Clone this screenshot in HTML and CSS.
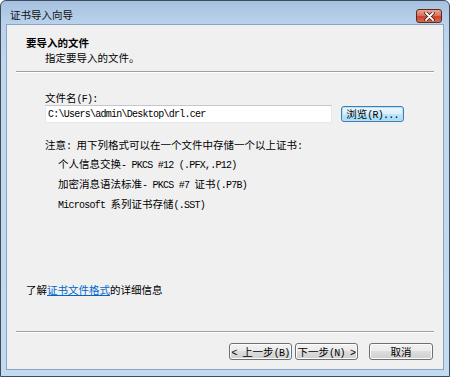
FILE: index.html
```html
<!DOCTYPE html>
<html lang="zh-CN">

<head>
	<meta charset="UTF-8">
	<meta name="viewport" content="width=device-width, initial-scale=1.0">
	<title>证书导入向导</title>
	<link rel="stylesheet" href="styles.css">
</head>

<body>
	<div class="window">
		<div class="titlebar">
			<span class="title">证书导入向导</span>
			<button class="close" aria-label="关闭">
				<svg width="11" height="9" viewBox="0 0 11 9">
					<path d="M2 1 L9 8 M9 1 L2 8" stroke="#3a1a14" stroke-width="3.4" stroke-linecap="round" />
					<path d="M2 1 L9 8 M9 1 L2 8" stroke="#ffffff" stroke-width="1.8" stroke-linecap="round" />
				</svg>
			</button>
		</div>

		<div class="client">
			<div class="header">
				<h1>要导入的文件</h1>
				<p>指定要导入的文件。</p>
			</div>
			<div class="sep"></div>

			<div class="content">
				<label for="file">文件名<span class="en">(F):</span></label>
				<div class="file-row">
					<input type="text" id="file" value="C:\Users\admin\Desktop\drl.cer" />
					<button class="btn btn-default">浏览<span class="en">(R)...</span></button>
				</div>

				<p class="note">注意<span class="en">: </span>用下列格式可以在一个文件中存储一个以上证书<span class="en">:</span></p>
				<ul class="formats">
					<li>个人信息交换<span class="en">- PKCS #12 (.PFX,.P12)</span></li>
					<li>加密消息语法标准<span class="en">- PKCS #7 </span>证书<span class="en">(.P7B)</span></li>
					<li><span class="en">Microsoft </span>系列证书存储<span class="en">(.SST)</span></li>
				</ul>
			</div>

			<p class="more">了解<a href="#">证书文件格式</a>的详细信息</p>

			<div class="sep sep-bottom"></div>
			<div class="footer">
				<button class="btn"><span class="en">&lt; </span>上一步<span class="en">(B)</span></button>
				<button class="btn">下一步<span class="en">(N) &gt;</span></button>
				<button class="btn btn-cancel">取消</button>
			</div>
		</div>
	</div>
</body>

</html>
```

FILE: styles.css
```css
* {
	margin: 0;
	padding: 0;
	box-sizing: border-box;
}

body {
	width: 450px;
	height: 377px;
	overflow: hidden;
	background: #ffffff;
	font-family: "Noto Sans CJK SC", "Noto Sans", sans-serif;
	font-size: 10.5px;
	line-height: 15px;
	color: #000000;
}

.en {
	font-family: "Liberation Mono", "Noto Sans CJK SC", monospace;
	font-size: 10px;
	line-height: 1;
	letter-spacing: -0.75px;
}

.window {
	width: 450px;
	height: 377px;
	border: 1px solid #3e4c5c;
	border-radius: 6px 6px 0 0;
	background: linear-gradient(#a6c1e0, #b9d1eb 22px, #c1d7ee 60px, #c4daf0);
	padding: 0 5px 6px;
	display: flex;
	flex-direction: column;
}

.titlebar {
	height: 23px;
	flex: none;
	display: flex;
	justify-content: space-between;
	align-items: flex-start;
	padding-left: 4px;
}

.title {
	line-height: 15px;
	margin-top: 6px;
	color: #111111;
}

.close {
	width: 26px;
	height: 14px;
	margin-top: 8px;
	margin-right: 2px;
	border: 1px solid #5b2a20;
	border-radius: 3px;
	background: linear-gradient(#eba390, #da7560 45%, #c8432c 55%, #d86a52);
	display: flex;
	align-items: center;
	justify-content: center;
}

.client {
	width: 438px;
	height: 346px;
	flex: none;
	border: 1px solid #8aa4c2;
	background: #f0f0f0;
	display: flex;
	flex-direction: column;
}

.header {
	padding: 10px 0 0 19px;
}

.header h1 {
	font-size: 10.5px;
	font-weight: bold;
	line-height: 15px;
}

.header p {
	padding-left: 19px;
}

.sep {
	flex: none;
	margin: 6px 9px 0;
	height: 2px;
	border-top: 1px solid #a0a0a0;
	border-bottom: 1px solid #ffffff;
}

.sep-bottom {
	margin-top: 34px;
}

.content {
	padding: 17px 0 0 38px;
}

.content label {
	display: block;
}

.file-row {
	display: flex;
	align-items: center;
	height: 18px;
}

.file-row input {
	width: 287px;
	height: 18px;
	border: 1px solid #e3e9ef;
	border-top-color: #c4c8ce;
	background: #ffffff;
	padding: 0 2px;
	font-family: "Liberation Mono", monospace;
	font-size: 10px;
	letter-spacing: -0.75px;
	color: #000000;
	outline: none;
}

.btn {
	width: 63px;
	height: 17px;
	border: 1px solid #707070;
	border-radius: 3px;
	background: linear-gradient(#f2f2f2, #ebebeb 50%, #dddddd 50%, #cfcfcf);
	box-shadow: inset 0 0 0 1px #fcfcfc;
	font-family: "Noto Sans CJK SC", sans-serif;
	font-size: 10.5px;
	line-height: 13px;
	color: #000000;
}

.btn-default {
	margin-left: 9px;
	height: 16px;
	border-color: #3c7fb1;
	background: linear-gradient(#eaf6fd, #d9f0fc 50%, #bee6fd 50%, #a7d9f5);
	box-shadow: inset 0 0 0 1px #b8e0f8;
}

.note {
	margin-top: 14px;
}

.formats {
	list-style: none;
	margin-top: 2px;
	padding-left: 13px;
}

.formats li {
	height: 20px;
	line-height: 20px;
}

.more {
	margin-top: 68px;
	padding-left: 19px;
}

.more a {
	color: #0066cc;
	text-decoration: underline;
}

.footer {
	display: flex;
	justify-content: flex-end;
	gap: 3px;
	padding: 10px 10px 0 0;
}

.btn-cancel {
	width: 64px;
	margin-left: 8px;
}
```
